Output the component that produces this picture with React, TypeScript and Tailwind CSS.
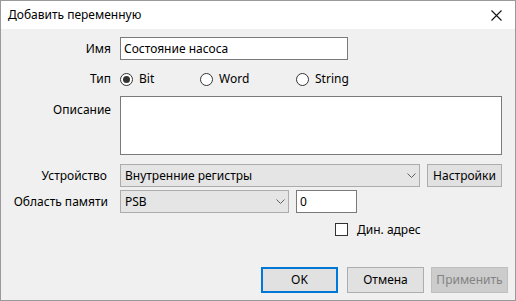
import React from "react";

const font = { fontFamily: '"Noto Sans", "Liberation Sans", sans-serif' };

function Radio({ label, checked }: { label: string; checked?: boolean }) {
  return (
    <div className="flex items-center gap-[6px]">
      <span className="w-[13px] h-[13px] rounded-full border border-[#333] bg-white flex items-center justify-center">
        {checked && <span className="w-[7px] h-[7px] rounded-full bg-[#333]" />}
      </span>
      <span>{label}</span>
    </div>
  );
}

function Chevron() {
  return (
    <svg width="9" height="5" viewBox="0 0 9 5" className="shrink-0">
      <path d="M0.5 0.5 L4.5 4.5 L8.5 0.5" fill="none" stroke="#606060" strokeWidth="1" />
    </svg>
  );
}

function Select({ value, width }: { value: string; width: string }) {
  return (
    <div
      className={`${width} h-[23px] flex items-center justify-between pl-[4px] pr-[3px] bg-[#e5e5e5] border border-[#acacac]`}
    >
      <span>{value}</span>
      <Chevron />
    </div>
  );
}

export default function App() {
  return (
    <div
      style={font}
      className="w-[516px] h-[301px] flex flex-col border border-[#9a9a9a] bg-[#f0f0f0] text-[12px] leading-none text-black"
    >
      {/* Title bar */}
      <div className="h-[28px] bg-white flex items-center justify-between pl-[7px] pr-[13px]">
        <span>Добавить переменную</span>
        <svg width="11" height="11" viewBox="0 0 11 11">
          <path d="M0.5 0.5 L10.5 10.5 M10.5 0.5 L0.5 10.5" stroke="#111" strokeWidth="1.1" />
        </svg>
      </div>

      {/* Form */}
      <div className="flex flex-col pr-[13px]">
        <div className="flex items-center gap-[9px] mt-[8px]">
          <span className="w-[110px] text-right">Имя</span>
          <div className="w-[228px] h-[23px] flex items-center pl-[3px] bg-white border border-[#7a7a7a]">
            Состояние насоса
          </div>
        </div>

        <div className="flex items-center gap-[9px] mt-[9px] h-[20px]">
          <span className="w-[110px] text-right">Тип</span>
          <div className="flex items-center">
            <div className="w-[80px]">
              <Radio label="Bit" checked />
            </div>
            <div className="w-[96px]">
              <Radio label="Word" />
            </div>
            <Radio label="String" />
          </div>
        </div>

        <div className="flex items-start gap-[9px] mt-[7px]">
          <span className="w-[110px] text-right pt-[8px]">Описание</span>
          <div className="flex-1 h-[59px] bg-white border border-[#7a7a7a]" />
        </div>

        <div className="flex items-center gap-[9px] mt-[9px]">
          <span className="w-[110px] text-right pr-[4px]">Устройство</span>
          <div className="flex-1 flex items-center gap-[7px]">
            <Select value="Внутренние регистры" width="w-[300px]" />
            <button className="flex-1 h-[23px] bg-[#e1e1e1] border border-[#adadad]">Настройки</button>
          </div>
        </div>

        <div className="flex items-center gap-[9px] mt-[3px]">
          <span className="w-[110px] text-right pr-[3px]">Область памяти</span>
          <Select value="PSB" width="w-[169px]" />
          <div className="w-[61px] h-[23px] flex items-center pl-[3px] -ml-[2px] bg-white border border-[#7a7a7a]">
            0
          </div>
        </div>

        <div className="flex items-center gap-[9px] mt-[10px] pl-[334px]">
          <span className="w-[13px] h-[13px] bg-white border border-[#333]" />
          <span>Дин. адрес</span>
        </div>
      </div>

      {/* Buttons */}
      <div className="flex justify-end pr-[7px] mt-[31px]">
        <button className="w-[77px] h-[26px] bg-[#e1e1e1] border-2 border-[#0078d7]">OK</button>
        <button className="w-[77px] h-[26px] ml-[9px] bg-[#e1e1e1] border border-[#adadad]">Отмена</button>
        <button className="w-[77px] h-[26px] ml-[7px] bg-[#cccccc] border border-[#bfbfbf] text-[#838383]">
          Применить
        </button>
      </div>
    </div>
  );
}
